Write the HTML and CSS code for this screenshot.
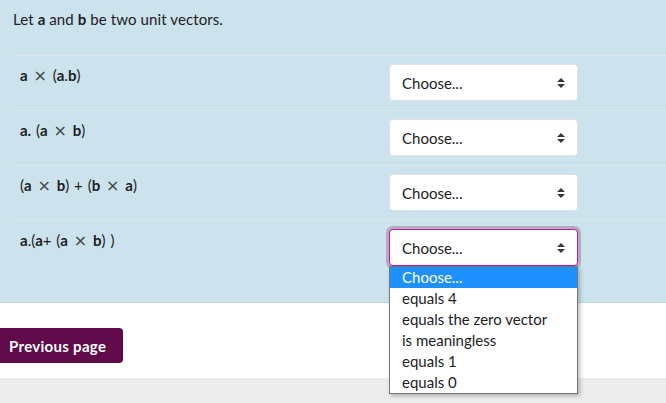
FILE: index.html
```html
<!DOCTYPE html>
<html>
<head>
<meta charset="utf-8">
<link rel="stylesheet" href="styles.css">
</head>
<body>
<div class="que">
  <p class="intro">Let <b>a</b> and <b>b</b> be two unit vectors.</p>
  <div class="rows">
    <div class="row">
      <div class="label"><b>a</b> <span class="x">×</span> (<b>a</b>.<b>b</b>)</div>
      <div class="select"><span>Choose...</span><svg class="arrows" width="8" height="10" viewBox="0 0 8 10"><path d="M4 0 L8 4 H0 Z M0 6 H8 L4 10 Z" fill="#343a40"/></svg></div>
    </div>
    <div class="row">
      <div class="label"><b>a.</b> (<b>a</b> <span class="x">×</span> <b>b</b>)</div>
      <div class="select"><span>Choose...</span><svg class="arrows" width="8" height="10" viewBox="0 0 8 10"><path d="M4 0 L8 4 H0 Z M0 6 H8 L4 10 Z" fill="#343a40"/></svg></div>
    </div>
    <div class="row">
      <div class="label">(<b>a</b> <span class="x">×</span> <b>b</b>) + (<b>b</b> <span class="x">×</span> <b>a</b>)</div>
      <div class="select"><span>Choose...</span><svg class="arrows" width="8" height="10" viewBox="0 0 8 10"><path d="M4 0 L8 4 H0 Z M0 6 H8 L4 10 Z" fill="#343a40"/></svg></div>
    </div>
    <div class="row last">
      <div class="label"><b>a</b>.(<b>a</b>+ (<b>a</b> <span class="x">×</span> <b>b</b>) )</div>
      <div class="select-wrap">
        <div class="select focus"><span>Choose...</span><svg class="arrows" width="8" height="10" viewBox="0 0 8 10"><path d="M4 0 L8 4 H0 Z M0 6 H8 L4 10 Z" fill="#343a40"/></svg></div>
        <ul class="menu">
          <li class="sel">Choose...</li>
          <li>equals 4</li>
          <li>equals the zero vector</li>
          <li>is meaningless</li>
          <li>equals 1</li>
          <li>equals 0</li>
        </ul>
      </div>
    </div>
  </div>
</div>
<div class="nav">
  <button class="prev">Previous page</button>
</div>
<div class="footer"></div>
</body>
</html>
```
FILE: styles.css
```css
html, body {
  margin: 0;
  padding: 0;
  background: #fff;
  font-family: "Source Sans Pro", Lato, "Liberation Sans", sans-serif;
  font-size: 15px;
  color: #1d2125;
  overflow: hidden;
}
.que {
  background: #cce2ec;
  padding: 9px 0 0 13px;
  height: 293px;
  border-bottom: 1px solid #b9d5e1;
}
.intro {
  margin: 0;
  height: 46px;
  line-height: 20px;
  letter-spacing: 0.1px;
}
.row {
  border-top: 1px solid #dde7ec;
  height: 54px;
  display: flex;
  align-items: flex-start;
}
.row.last {
  height: 82px;
}
.label {
  width: 369px;
  padding: 9px 0 0 7px;
  line-height: 20px;
  word-spacing: 1px;
}
.x {
  font-family: "DejaVu Sans", sans-serif;
  font-size: 16px;
  color: #444;
  margin: 0 1px;
}
.select-wrap {
  position: relative;
}
.select {
  margin-top: 8px;
  width: 187px;
  height: 35px;
  background: #fff;
  border: 1px solid #dee2e6;
  border-radius: 4px;
  display: flex;
  align-items: center;
  justify-content: space-between;
  box-sizing: content-box;
  padding: 0;
}
.select span {
  padding-left: 12px;
}
.arrows {
  margin-right: 12px;
}
.select.focus {
  border-color: #c01c9b;
  box-shadow: 0 0 0 3px rgba(96, 10, 74, 0.25);
}
.menu {
  position: absolute;
  left: 0;
  top: 45px;
  width: 187px;
  margin: 0;
  padding: 0;
  list-style: none;
  background: #fff;
  border: 1px solid #767676;
  box-shadow: 2px 2px 4px rgba(0,0,0,0.25);
}
.menu li {
  height: 21px;
  line-height: 21px;
  padding-left: 12px;
}
.menu li.sel {
  background: #1e90ff;
  color: #fff;
}
.nav {
  height: 75px;
  display: flex;
  align-items: center;
}
.prev {
  margin-left: -10px;
  margin-top: 10px;
  height: 35px;
  padding: 0 17px 0 19px;
  background: #600a4a;
  color: #fff;
  border: none;
  border-radius: 4px;
  font-family: inherit;
  font-size: 15px;
  font-weight: 700;
  letter-spacing: 0.3px;
}
.footer {
  background: #ececec;
  height: 30px;
}
```
